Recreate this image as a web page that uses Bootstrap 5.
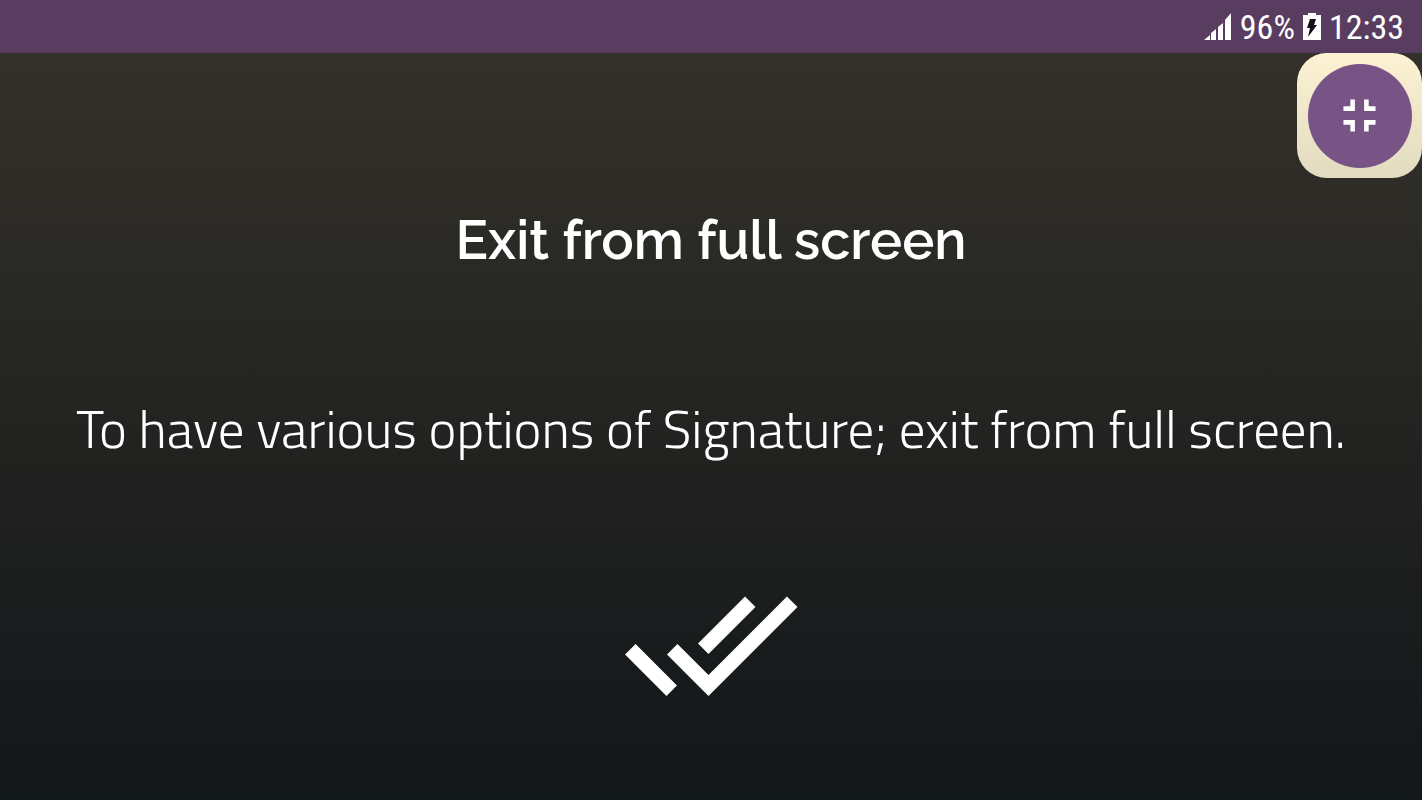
<!DOCTYPE html>
<html lang="en">
<head>
<meta charset="utf-8">
<meta name="viewport" content="width=device-width, initial-scale=1">
<title>Exit from full screen</title>
<link href="https://cdn.jsdelivr.net/npm/bootstrap@5.3.0/dist/css/bootstrap.min.css" rel="stylesheet">
<style>
  body { background: #33312a; font-family: "Open Sans", sans-serif; }
  .status-bar { height: 53px; padding-right: 18px; background: #583d60; font-family: "Roboto Condensed", "Liberation Sans Narrow", sans-serif; font-size: 34px; line-height: 52px; }
  .stage { background: linear-gradient(#33312a, #232321 50%, #12171a); }
  .exit-tile { width: 125px; height: 125px; border-radius: 30px; background: linear-gradient(#fdf2d3, #e1dbc0); }
  .exit-btn { width: 104px; height: 104px; background: #785385; }
  .title { margin-top: 30px; font-family: Raleway, Lato, sans-serif; font-weight: 600; font-size: 54px; line-height: 64px; }
  .message { margin-top: 119px; font-family: "Titillium Web", "Open Sans", sans-serif; font-weight: 300; font-size: 53px; line-height: 76px; }
  .done-btn { margin-top: 88px; }
</style>
</head>
<body class="min-vh-100 d-flex flex-column text-white">
<header class="status-bar d-flex align-items-center justify-content-end">
  <svg class="me-2" width="29" height="28" viewBox="1 0 29 28" fill="#fff" aria-label="Signal"><path d="M2 27l6-5v5zM9 27v-7l5-4v11zM16 27V14l5-4v17zM23 27V7l6-7v27z"/></svg>
  <span>96%</span>
  <svg class="mx-2" width="18" height="28" viewBox="0 0 18 28" aria-label="Charging"><path fill="#fff" d="M0 2h5V0h8v2h5v25H0z"/><path fill="#16101a" d="M7 6h6l-2 6h3L5 24l2-9H4z"/></svg>
  <span>12:33</span>
</header>
<main class="stage flex-grow-1 d-flex flex-column align-items-center text-center">
  <div class="exit-tile align-self-end d-flex align-items-center justify-content-center">
    <button type="button" class="exit-btn btn rounded-circle border-0 p-0 d-flex align-items-center justify-content-center" aria-label="Exit full screen">
      <svg width="55" height="55" viewBox="0 0 24 24" fill="#fff"><path d="M5 16h3v3h2v-5H5v2zm3-8H5v2h5V5H8v3zm6 11h2v-3h3v-2h-5v5zm2-11V5h-2v5h5V8h-3z"/></svg>
    </button>
  </div>
  <h1 class="title mb-0">Exit from full screen</h1>
  <p class="message mb-0">To have various options of Signature; exit from full screen.</p>
  <button type="button" class="done-btn btn border-0 p-0" aria-label="Done">
    <svg class="d-block" width="178" height="178" viewBox="0 0 24 24" fill="#fff"><path d="M18 7l-1.41-1.41-6.34 6.34 1.41 1.41L18 7zm4.24-1.41L11.66 16.17 7.48 12l-1.41 1.41L11.66 19l12-12-1.42-1.41zM.41 13.41L6 19l1.41-1.41L1.83 12 .41 13.41z"/></svg>
  </button>
</main>
<script src="https://cdn.jsdelivr.net/npm/bootstrap@5.3.0/dist/js/bootstrap.bundle.min.js"></script>
</body>
</html>
